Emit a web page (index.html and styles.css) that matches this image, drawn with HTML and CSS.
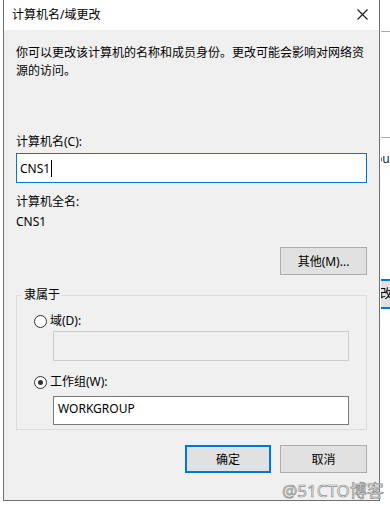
FILE: index.html
```html
<!DOCTYPE html>
<html lang="zh-CN">
<head>
    <meta charset="UTF-8">
    <title>计算机名/域更改</title>
    <link rel="stylesheet" href="styles.css">
</head>
<body>
    <div class="screen">
        <div class="dialog">
            <div class="titlebar">
                <span class="title">计算机名/域更改</span>
                <svg class="close" width="11" height="11" viewBox="0 0 11 11">
                    <path d="M0.5 0.5 L10.5 10.5 M10.5 0.5 L0.5 10.5" stroke="#1a1a1a" stroke-width="1.1" fill="none"/>
                </svg>
            </div>
            <div class="content">
                <p class="desc">你可以更改该计算机的名称和成员身份。更改可能会影响对网络资源的访问。</p>

                <div class="label name-label">计算机名(C):</div>
                <div class="name-input">CNS1<span class="caret"></span></div>

                <div class="label full-label">计算机全名:</div>
                <div class="label full-name">CNS1</div>

                <div class="btn-row more-row">
                    <button type="button" class="btn">其他(M)...</button>
                </div>

                <fieldset class="member">
                    <legend>隶属于</legend>
                    <div class="member-inner">
                        <div class="radio-row">
                            <span class="radio"></span>域(D):
                        </div>
                        <div class="field disabled"></div>
                        <div class="radio-row workgroup-row">
                            <span class="radio checked"></span>工作组(W):
                        </div>
                        <div class="field workgroup">WORKGROUP</div>
                    </div>
                </fieldset>

                <div class="btn-row actions">
                    <button type="button" class="btn primary">确定</button>
                    <button type="button" class="btn">取消</button>
                </div>
            </div>
        </div>
        <!-- window behind the dialog, mostly hidden -->
        <div class="behind">
            <div class="behind-line first"></div>
            <div class="behind-line second"></div>
            <div class="behind-text">ou</div>
            <div class="behind-btn">改</div>
        </div>
        <div class="watermark">@51CTO博客</div>
    </div>
</body>
</html>
```

FILE: styles.css
```css
body {
    margin: 0;
    background-color: #fff;
    font-family: "Noto Sans", "Noto Sans CJK SC", sans-serif;
    font-size: 12px;
    color: #000;
}
.screen {
    display: flex;
    height: 508px;
    position: relative;
    overflow: hidden;
}
.dialog {
    margin-left: 3px;
    width: 375px;
    height: 500px;
    border: 1px solid #707070;
    border-top: none;
    display: flex;
    flex-direction: column;
    flex-shrink: 0;
}
.titlebar {
    height: 30px;
    background-color: #fff;
    display: flex;
    align-items: center;
    justify-content: space-between;
    padding: 0 11px 0 8px;
}
.title {
    line-height: 18px;
}
.close {
    margin-top: -1px;
}
.content {
    flex: 1;
    background-color: #f0f0f0;
    padding: 14px 12px 0 12px;
}
.desc {
    margin: 0;
    line-height: 18px;
}
.label {
    line-height: 18px;
}
.name-label {
    margin-top: 53px;
}
.name-input {
    margin-top: 2px;
    height: 28px;
    border: 1px solid #0078d7;
    background-color: #fff;
    padding-left: 3px;
    display: flex;
    align-items: center;
}
.caret {
    display: inline-block;
    width: 1px;
    height: 17px;
    background-color: #000;
    margin-left: 1px;
}
.full-label {
    margin-top: 10px;
}
.full-name {
    margin-top: 2px;
}
.btn-row {
    display: flex;
    justify-content: flex-end;
    gap: 9px;
}
.more-row {
    margin-top: 16px;
}
.btn {
    width: 87px;
    height: 28px;
    background-color: #e1e1e1;
    border: 1px solid #adadad;
    font-family: inherit;
    font-size: 12px;
    color: #000;
    padding: 0;
    margin: 0;
}
.btn.primary {
    width: 86px;
    border: 2px solid #0078d7;
}
.member {
    margin: 11px 0 0 0;
    padding: 0;
    border: 1px solid #dcdcdc;
    height: 144px;
    box-sizing: border-box;
}
.member legend {
    margin-left: 5px;
    padding: 0 2px;
    line-height: 18px;
}
.member-inner {
    padding: 8px 0 0 17px;
}
.radio-row {
    display: flex;
    align-items: center;
    line-height: 18px;
}
.radio {
    width: 11px;
    height: 11px;
    border: 1px solid #333;
    border-radius: 50%;
    background-color: #fff;
    margin-right: 3px;
    position: relative;
    box-sizing: content-box;
}
.radio.checked::after {
    content: "";
    position: absolute;
    left: 3px;
    top: 3px;
    width: 5px;
    height: 5px;
    border-radius: 50%;
    background-color: #333;
}
.field {
    margin-left: 19px;
    width: 294px;
    box-sizing: content-box;
}
.field.disabled {
    margin-top: 1px;
    height: 28px;
    border: 1px solid #cccccc;
    background-color: #f0f0f0;
}
.workgroup-row {
    margin-top: 12px;
}
.field.workgroup {
    margin-top: 5px;
    height: 24px;
    border: 1px solid #7a7a7a;
    background-color: #fff;
    padding: 3px 0 0 4px;
    width: 290px;
    line-height: 17px;
}
.actions {
    margin-top: 15px;
}
.behind {
    width: 10px;
    margin-left: 1px;
    overflow: hidden;
    background-color: #fff;
}
.behind-line {
    height: 1px;
    background-color: #a9a9a9;
}
.behind-line.first {
    margin-top: 31px;
}
.behind-line.second {
    margin-top: 105px;
}
.behind-text {
    margin-top: 13px;
    line-height: 16px;
    margin-left: -6px;
    color: #1a1a1a;
}
.behind-btn {
    margin-top: 112px;
    height: 26px;
    border-top: 2px solid #0078d7;
    border-bottom: 2px solid #0078d7;
    background-color: #e1e1e1;
    line-height: 26px;
    margin-left: -1px;
}
.watermark {
    position: absolute;
    left: 282px;
    top: 481px;
    font-size: 17px;
    line-height: 20px;
    color: rgba(255, 255, 255, 0.85);
    -webkit-text-stroke: 0.7px #8a8a8a;
    white-space: nowrap;
}
```
